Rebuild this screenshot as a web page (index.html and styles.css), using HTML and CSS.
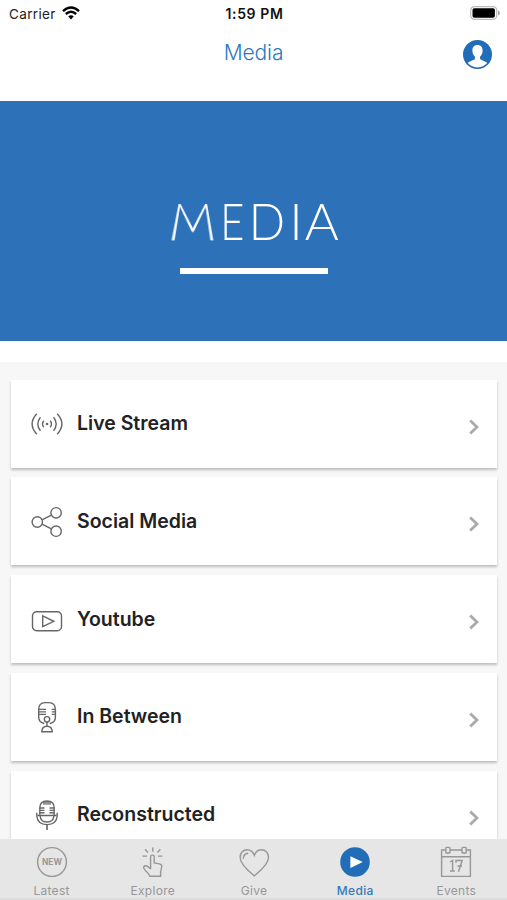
FILE: index.html
```html
<!DOCTYPE html>
<html lang="en">

<head>
    <meta charset="UTF-8">
    <meta name="viewport" content="width=device-width, initial-scale=1.0">
    <title>Media</title>
    <link rel="stylesheet" href="styles.css">
</head>

<body>
    <header class="header">
        <div class="status-bar">
            <div class="carrier">
                <span>Carrier</span>
                <svg class="wifi" viewBox="0 0 18 14">
                    <path d="M1 5.1Q9 -2.2 17 5.1" />
                    <path d="M3.8 8Q9 3.4 14.2 8" />
                    <path class="dot" d="M6.2 10.3Q9 8 11.8 10.3L9 13.4Z" />
                </svg>
            </div>
            <span class="time">1:59 PM</span>
            <div class="battery-wrap">
                <svg class="battery" viewBox="0 0 30 14">
                    <rect x="0.7" y="0.7" width="26" height="12.6" rx="3.6" fill="none" stroke="#bbb" stroke-width="1.2" />
                    <rect x="2.5" y="2.2" width="22.4" height="9.6" rx="1.8" />
                    <path d="M28 4.5Q30 5.4 30 7Q30 8.6 28 9.5Z" fill="#aaa" />
                </svg>
            </div>
        </div>
        <div class="nav-bar">
            <h1>Media</h1>
            <svg class="profile" viewBox="0 0 28 28">
                <circle cx="14" cy="14" r="14" fill="#216db8" />
                <path d="M14 4.8C10.7 4.8 9 7 9.1 10C9 12.8 10 14.6 11.5 16V18.2C10.5 20 6.3 20.2 4.6 22.2A12.5 12.5 0 0 0 23.4 22.2C21.7 20.2 17.5 20 16.5 18.2V16C18 14.6 19 12.8 18.9 10C19 7 17.3 4.8 14 4.8Z" fill="#fff" />
            </svg>
        </div>
    </header>

    <section class="banner">
        <h2><span class="banner-m">M</span><span class="banner-e">E</span><span class="banner-d">D</span><span>I</span><span>A</span></h2>
        <div class="banner-line"></div>
    </section>

    <main class="list">
        <a class="card">
            <svg class="icon" viewBox="0 0 32 32">
                <circle class="solid" cx="16" cy="16" r="1.3" />
                <path d="M12.8 12.8Q10.2 16 12.8 19.2M19.2 12.8Q21.8 16 19.2 19.2M9.4 9.2Q4.2 16 9.4 22.8M22.6 9.2Q27.8 16 22.6 22.8M5.8 5.8Q-3.6 16 5.8 26.2M26.2 5.8Q35.6 16 26.2 26.2" />
            </svg>
            <span class="card-title">Live Stream</span>
            <svg class="chevron" viewBox="0 0 10 16"><path d="M1.2 1.4L8 8L1.2 14.6" /></svg>
        </a>
        <a class="card">
            <svg class="icon" viewBox="0 0 32 32">
                <circle cx="6.3" cy="16" r="5.2" />
                <circle cx="25.1" cy="6.8" r="5.2" />
                <circle cx="25.1" cy="25.2" r="5.2" />
                <path d="M11 13.8L20.4 9.1M11 18.2L20.4 22.9" />
            </svg>
            <span class="card-title">Social Media</span>
            <svg class="chevron" viewBox="0 0 10 16"><path d="M1.2 1.4L8 8L1.2 14.6" /></svg>
        </a>
        <a class="card">
            <svg class="icon" viewBox="0 0 32 32">
                <rect x="1.5" y="7.8" width="29" height="19" rx="4.2" />
                <path d="M11.7 11.9V22.7L22.8 17.3Z" />
            </svg>
            <span class="card-title">Youtube</span>
            <svg class="chevron" viewBox="0 0 10 16"><path d="M1.2 1.4L8 8L1.2 14.6" /></svg>
        </a>
        <a class="card">
            <svg class="icon" viewBox="0 0 32 32">
                <path d="M13.3 22.5C9.5 21.8 7.7 19.5 7.7 16V8.5Q7.7 1.6 14 1.6H18Q24.4 1.6 24.4 8.5V16C24.4 19.5 22.5 21.8 18.8 22.5" />
                <path d="M7.7 8.4H15M7.7 10.9H15M7.7 13.4H15M20.8 8.4H24.4M20.8 10.9H24.4M20.8 13.4H24.4" />
                <circle cx="16" cy="18.3" r="2.7" />
                <path d="M16 21V25.2M10.8 30.7Q11 25.2 16 25.2Q21 25.2 21.3 30.7Z" />
            </svg>
            <span class="card-title">In Between</span>
            <svg class="chevron" viewBox="0 0 10 16"><path d="M1.2 1.4L8 8L1.2 14.6" /></svg>
        </a>
        <a class="card">
            <svg class="icon" viewBox="0 0 32 32">
                <path d="M8.8 16.3V8.8Q8.8 2 16 2Q23.2 2 23.2 8.8V16.3" />
                <path d="M13 2.5V5.8M15 2V5.8M17 2V5.8M19 2.5V5.8" />
                <path d="M8.8 9H13.5M8.8 11.4H13.5M8.8 13.8H13.5M18.5 9H23.2M18.5 11.4H23.2M18.5 13.8H23.2" />
                <path d="M6.4 16.5H25.6M9 16.5Q9.5 23 16 23Q22.5 23 23 16.5" />
                <path d="M5.8 13.7V17Q6.4 25.4 16 25.6Q25.6 25.4 26.2 17V13.7" />
                <path d="M16 25.6V31" stroke-width="1.6" />
            </svg>
            <span class="card-title">Reconstructed</span>
            <svg class="chevron" viewBox="0 0 10 16"><path d="M1.2 1.4L8 8L1.2 14.6" /></svg>
        </a>
    </main>

    <nav class="tab-bar">
        <a class="tab">
            <svg viewBox="0 0 32 32">
                <circle cx="16" cy="16" r="14.4" />
                <text x="16" y="19.1" textLength="20" lengthAdjust="spacingAndGlyphs">NEW</text>
            </svg>
            <span>Latest</span>
        </a>
        <a class="tab">
            <svg viewBox="0 0 32 32">
                <path d="M13.6 23V10.8Q13.6 9.1 15.4 9.1Q17.2 9.1 17.2 10.8V17L22.4 17.9Q25 18.4 24.8 20.6L23.6 26.2V30.2H12.8Q11.8 27.3 9 25.3L6.8 22.3Q6.2 19.9 8.8 19.8L10.8 20.4L13.6 23" />
                <path d="M15.8 1.6V5.8M8 3.2L11 6.4M23.4 3.2L20.4 6.4M5.6 10.1H10M21 10.1H25.4" />
            </svg>
            <span>Explore</span>
        </a>
        <a class="tab">
            <svg viewBox="0 0 32 32">
                <path d="M16.3 29.9C12.3 26.4 2.1 18.8 2.1 11.2C2.1 6.8 5.3 3.7 9.1 3.7C12.7 3.7 15.1 6 16.3 9.3C17.5 6 19.9 3.7 23.5 3.7C27.3 3.7 30.5 6.8 30.5 11.2C30.5 18.8 20.3 26.4 16.3 29.9Z" />
                <path d="M5.3 12.8Q5.3 7.7 10.2 7.2" />
            </svg>
            <span>Give</span>
        </a>
        <a class="tab active">
            <svg viewBox="0 0 32 32">
                <circle cx="16" cy="16" r="14.8" />
                <path d="M11.4 10.2V22.1L23.7 16.1Z" />
            </svg>
            <span>Media</span>
        </a>
        <a class="tab">
            <svg viewBox="0 0 32 32">
                <path d="M5.8 4H1.6V30.4H30.4V4H26.2M10 4H22M1.6 10.7H30.4" />
                <rect x="5.8" y="1.4" width="4.2" height="5.6" rx="0.8" />
                <rect x="22" y="1.4" width="4.2" height="5.6" rx="0.8" />
                <path d="M10 16L12.6 14.4V24.8M10 25H14.8M16 16.7V14.5H22.2L18.5 25.8M17.5 20H22" />
            </svg>
            <span>Events</span>
        </a>
    </nav>
</body>

</html>
```
FILE: styles.css
```css
* {
    box-sizing: border-box;
}

body {
    margin: 0;
    height: 900px;
    display: flex;
    flex-direction: column;
    overflow: hidden;
    font-family: Inter, "Liberation Sans", sans-serif;
    background-color: #fff;
    color: #222;
}

.header {
    height: 101px;
    flex-shrink: 0;
}

.status-bar {
    display: grid;
    grid-template-columns: 1fr auto 1fr;
    align-items: center;
    height: 27px;
    padding: 0 7px 0 9px;
    font-size: 13.5px;
}

.carrier {
    display: flex;
    align-items: center;
    gap: 6px;
    letter-spacing: 0.35px;
}

.wifi {
    width: 18px;
    height: 14px;
    margin-top: -2px;
    fill: none;
    stroke: #000;
    stroke-width: 2.4;
}

.wifi .dot {
    fill: #000;
    stroke: none;
}

.time {
    font-size: 14px;
    font-weight: 600;
    letter-spacing: 0.6px;
    color: #111;
}

.battery-wrap {
    display: flex;
    justify-content: flex-end;
}

.battery {
    width: 30px;
    height: 14px;
    margin-top: -1px;
}

.nav-bar {
    display: grid;
    grid-template-columns: 1fr auto 1fr;
    align-items: center;
    height: 54px;
    padding: 0 15px;
}

.nav-bar h1 {
    grid-column: 2;
    margin: 0 0 3px;
    font-size: 21px;
    font-weight: 300;
    letter-spacing: -0.1px;
    color: #2b78bf;
}

.profile {
    justify-self: end;
    width: 29px;
    height: 29px;
}

.banner {
    height: 240px;
    flex-shrink: 0;
    display: flex;
    flex-direction: column;
    align-items: center;
    padding-top: 88px;
    background-color: #2d72b8;
    color: #fff;
}

.banner h2 {
    display: flex;
    justify-content: center;
    margin: 0;
    font-family: Lato, "Open Sans", sans-serif;
    font-size: 52px;
    font-weight: 300;
    line-height: 62px;
    letter-spacing: 2px;
}

/* splayed legs on the M */
.banner-m {
    transform: translate(3px, -3px) perspective(60px) rotateX(33deg) scale(0.91, 1.11);
}

.banner-e {
    transform: translateX(2px) scaleX(0.8);
}

.banner-d {
    transform: translateX(-1px) scaleX(0.92);
}

.banner-line {
    width: 148px;
    height: 6px;
    margin-top: 17px;
    background-color: #fff;
}

.list {
    flex: 1;
    min-height: 0;
    overflow: hidden;
    display: flex;
    flex-direction: column;
    gap: 9.75px;
    margin-top: 21px;
    padding: 17.5px 10px 0 11px;
    background-color: #f7f7f7;
}

.card {
    display: flex;
    align-items: center;
    flex-shrink: 0;
    height: 88px;
    padding: 0 18px 0 20px;
    background-color: #fff;
    box-shadow: 0 1.5px 2.5px rgba(0, 0, 0, 0.24);
}

.icon {
    width: 32px;
    height: 32px;
    margin-top: 1px;
    fill: none;
    stroke: #666;
    stroke-width: 1.4;
}

.icon .solid {
    fill: #666;
    stroke: none;
}

.card-title {
    flex: 1;
    margin: -1px 0 0 14px;
    font-size: 19.5px;
    font-weight: 600;
}

.chevron {
    width: 10px;
    height: 16px;
    margin-top: 6px;
    fill: none;
    stroke: #aaa;
    stroke-width: 2.8;
}

.tab-bar {
    display: grid;
    grid-template-columns: repeat(5, 1fr);
    height: 61px;
    flex-shrink: 0;
    padding: 7px 0 0 1px;
    background-color: #e6e6e6;
    border-bottom: 2px solid #dcdcdc;
}

.tab {
    display: flex;
    flex-direction: column;
    align-items: center;
    gap: 6px;
    font-size: 12px;
    line-height: 14px;
    letter-spacing: 0.3px;
    color: #979797;
}

.tab svg {
    width: 32px;
    height: 32px;
    fill: none;
    stroke: #979797;
    stroke-width: 1.4;
}

.tab text {
    font-size: 8.6px;
    font-weight: 700;
    letter-spacing: 0;
    text-anchor: middle;
    fill: #979797;
    stroke: none;
}

.tab.active {
    color: #3479ba;
    font-weight: 500;
}

.tab.active svg {
    stroke: none;
}

.tab.active circle {
    fill: #216db8;
}

.tab.active path {
    fill: #fff;
}
```
